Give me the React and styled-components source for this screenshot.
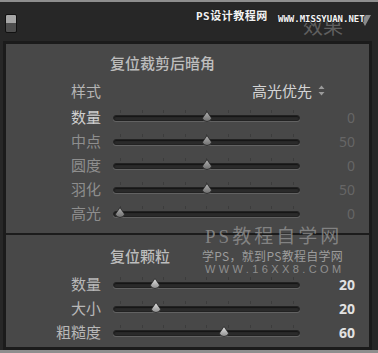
import styled, { createGlobalStyle } from "styled-components";

const GlobalStyle = createGlobalStyle`
  html, body {
    margin: 0;
    padding: 0;
    background: #8e8e8e;
    overflow: hidden;
  }
  body {
    font-family: "Noto Sans CJK SC", "Noto Sans", sans-serif;
  }
`;

const Frame = styled.div`
  position: relative;
  margin-top: 2px;
  width: 378px;
  height: 348px;
  background: #272727;
  padding: 0 6px 0 3px;
  box-sizing: border-box;
`;

const Header = styled.div`
  height: 39px;
  display: flex;
  align-items: center;
  justify-content: space-between;
  padding: 0 1px 0 2px;
`;

const Toggle = styled.div`
  width: 10px;
  height: 17px;
  border: 1px solid #111;
  border-radius: 2px;
  background: linear-gradient(#a6a6a6 0 50%, #4e4e4e 50% 100%);
  margin-top: 4px;
`;

const HeaderTitle = styled.div`
  display: flex;
  align-items: center;
  gap: 16px;
  font-size: 20px;
  color: #5f5f5f;
  margin-top: 8px;
`;

const Arrow = styled.span`
  width: 0;
  height: 0;
  border-left: 6px solid transparent;
  border-right: 6px solid transparent;
  border-top: 11px solid #8a8a8a;
  margin-top: -10px;
`;

const Panel = styled.div`
  border: 3px solid #1b1b1b;
  background: #484848;
  height: 309px;
  box-sizing: border-box;
  display: flex;
  flex-direction: column;
`;

const Section = styled.div`
  display: flex;
  flex-direction: column;
  padding: ${(p) => p.$pad};
  border-bottom: ${(p) => (p.$divider ? "2px solid #1c1c1c" : "none")};
`;

const Title = styled.div`
  height: 20px;
  line-height: 20px;
  font-size: 15px;
  font-weight: 500;
  color: #bdbdbd;
  padding-left: 104px;
  margin-bottom: ${(p) => p.$gap}px;
`;

const Row = styled.div`
  display: grid;
  grid-template-columns: 95px 187px 1fr;
  column-gap: 12px;
  align-items: center;
  height: ${(p) => p.$h || 24}px;
  padding-right: 14px;
`;

const Label = styled.div`
  text-align: right;
  font-size: 15px;
  line-height: 20px;
  color: ${(p) => p.$color};
`;

const Value = styled.div`
  text-align: right;
  font-family: "Noto Sans", sans-serif;
  font-size: 14px;
  font-weight: ${(p) => (p.$bright ? 700 : 400)};
  color: ${(p) => (p.$bright ? "#e2e2e2" : "#666")};
`;

const Choice = styled.div`
  grid-column: 2 / 4;
  justify-self: end;
  display: flex;
  align-items: center;
  gap: 6px;
  font-size: 15px;
  color: #d4d4d4;
  margin-right: 30px;
`;

const Track = styled.div`
  position: relative;
  height: 22px;
`;

const Rail = styled.div`
  position: absolute;
  left: 0;
  right: 0;
  top: 9px;
  height: 4px;
  border-radius: 3px;
  background: #2a2a2a;
  border: 1px solid #222;
  box-shadow: 0 1px 0 #626262, inset 0 1px 1px #151515;
`;

const Tick = styled.span`
  position: absolute;
  top: 4px;
  width: 1px;
  height: 3px;
  background: #3c3c3c;
`;

const Thumb = styled.svg`
  position: absolute;
  top: 5px;
  width: 12px;
  height: 13px;
  margin-left: -6px;
`;

const Watermark = styled.div`
  position: absolute;
  left: ${(p) => p.$x}px;
  top: ${(p) => p.$y}px;
  white-space: nowrap;
  pointer-events: none;
  line-height: 1.2;
`;

const PixelMark = styled(Watermark)`
  font-family: "DejaVu Sans Mono", "Noto Sans CJK SC", monospace;
  font-weight: 700;
  color: #f2f2f2;
  text-shadow: 1px 0 #222, -1px 0 #222, 0 1px #222, 0 -1px #222;
  font-size: ${(p) => p.$size}px;
  letter-spacing: ${(p) => p.$ls || 0}px;
`;

const SoftMark = styled(Watermark)`
  font-family: ${(p) => p.$family};
  font-size: ${(p) => p.$size}px;
  letter-spacing: ${(p) => p.$ls || 0}px;
  color: ${(p) => p.$color};
`;

const TICKS = Array.from({ length: 9 }, (_, i) => 7 + i * 21.6);

const Slider = ({ pct, bright }) => {
  const light = bright ? "#e6e6e6" : "#b4b4b4";
  const dark = bright ? "#8c8c8c" : "#6c6c6c";
  const id = bright ? "tb" : "td";
  return (
    <Track>
      {TICKS.map((x) => (
        <Tick key={x} style={{ left: x }} />
      ))}
      <Rail />
      <Thumb viewBox="0 0 12 13" style={{ left: 7 + (173 * pct) / 100 }}>
        <defs>
          <linearGradient id={id} x1="0" y1="0" x2="0" y2="1">
            <stop offset="0" stopColor={light} />
            <stop offset="1" stopColor={dark} />
          </linearGradient>
        </defs>
        <path
          d="M6 0.5 L10.6 7.2 A4.8 4.6 0 0 1 1.4 7.2 Z"
          fill={`url(#${id})`}
          stroke="#222"
          strokeWidth="0.8"
        />
      </Thumb>
    </Track>
  );
};

const vignette = [
  { label: "数量", value: 0, pct: 50, color: "#cfcfcf" },
  { label: "中点", value: 50, pct: 50, color: "#8e8e8e" },
  { label: "圆度", value: 0, pct: 50, color: "#8e8e8e" },
  { label: "羽化", value: 50, pct: 50, color: "#8e8e8e" },
  { label: "高光", value: 0, pct: 0, color: "#8e8e8e" },
];

const grain = [
  { label: "数量", value: 20, pct: 20 },
  { label: "大小", value: 20, pct: 21 },
  { label: "粗糙度", value: 60, pct: 60 },
];

export default function App() {
  return (
    <>
      <GlobalStyle />
      <Frame>
        <Header>
          <Toggle />
          <HeaderTitle>
            效果
            <Arrow />
          </HeaderTitle>
        </Header>
        <Panel>
          <Section $pad="9px 0 8px" $divider>
            <Title $gap={7}>复位裁剪后暗角</Title>
            <Row $h={20} style={{ marginBottom: 5 }}>
              <Label $color="#b4b4b4">样式</Label>
              <Choice>
                高光优先
                <svg width="7" height="11" viewBox="0 0 7 11">
                  <path d="M3.5 0.5 L6.5 4 H0.5 Z M3.5 10.5 L6.5 7 H0.5 Z" fill="#9a9a9a" />
                </svg>
              </Choice>
            </Row>
            {vignette.map((r) => (
              <Row key={r.label}>
                <Label $color={r.color}>{r.label}</Label>
                <Slider pct={r.pct} />
                <Value>{r.value}</Value>
              </Row>
            ))}
          </Section>
          <Section $pad="11px 0 3px">
            <Title $gap={6}>复位颗粒</Title>
            {grain.map((r) => (
              <Row key={r.label}>
                <Label $color="#b8b8b8">{r.label}</Label>
                <Slider pct={r.pct} bright />
                <Value $bright>{r.value}</Value>
              </Row>
            ))}
          </Section>
        </Panel>

        <PixelMark $x={196} $y={8} $size={11} $ls={0.5}>PS设计教程网</PixelMark>
        <PixelMark $x={278} $y={12} $size={9}>WWW.MISSYUAN.NET</PixelMark>
        <SoftMark $x={205} $y={224} $size={19} $ls={3} $family='"Liberation Serif", "Noto Sans CJK SC", serif' $color="rgba(150,150,150,0.75)">
          PS教程自学网
        </SoftMark>
        <SoftMark $x={202} $y={247} $size={12} $ls={0.3} $family='"Noto Sans CJK SC", sans-serif' $color="#9c9c9c">
          学PS，就到PS教程自学网
        </SoftMark>
        <SoftMark $x={205} $y={261} $size={11} $ls={3.4} $family='"Liberation Sans", sans-serif' $color="#8f8f8f">
          WWW.16XX8.COM
        </SoftMark>
      </Frame>
    </>
  );
}
